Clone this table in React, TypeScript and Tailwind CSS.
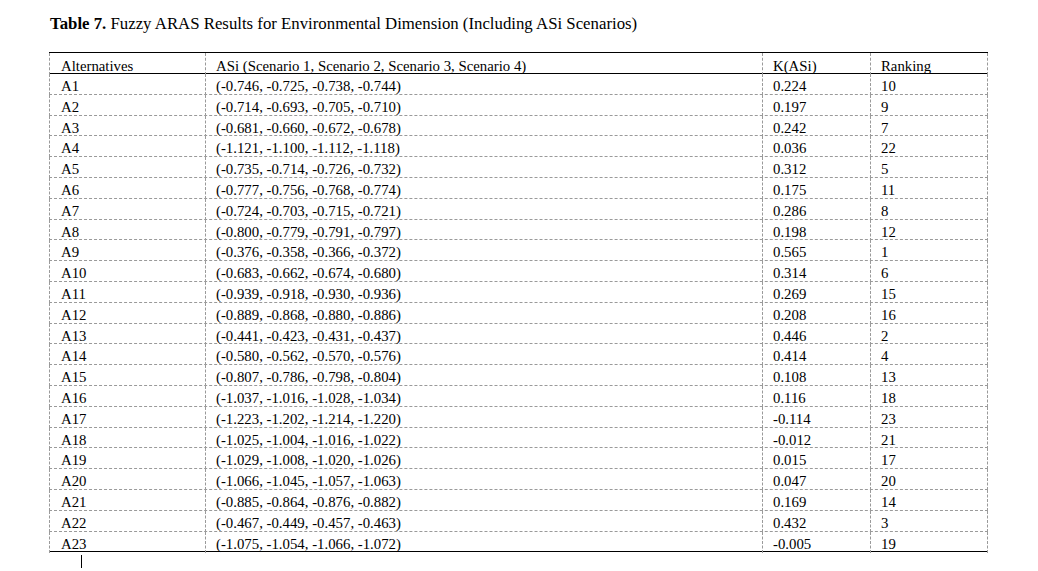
import React from "react";

const rows: [string, string, string, string][] = [
  ["A1", "(-0.746, -0.725, -0.738, -0.744)", "0.224", "10"],
  ["A2", "(-0.714, -0.693, -0.705, -0.710)", "0.197", "9"],
  ["A3", "(-0.681, -0.660, -0.672, -0.678)", "0.242", "7"],
  ["A4", "(-1.121, -1.100, -1.112, -1.118)", "0.036", "22"],
  ["A5", "(-0.735, -0.714, -0.726, -0.732)", "0.312", "5"],
  ["A6", "(-0.777, -0.756, -0.768, -0.774)", "0.175", "11"],
  ["A7", "(-0.724, -0.703, -0.715, -0.721)", "0.286", "8"],
  ["A8", "(-0.800, -0.779, -0.791, -0.797)", "0.198", "12"],
  ["A9", "(-0.376, -0.358, -0.366, -0.372)", "0.565", "1"],
  ["A10", "(-0.683, -0.662, -0.674, -0.680)", "0.314", "6"],
  ["A11", "(-0.939, -0.918, -0.930, -0.936)", "0.269", "15"],
  ["A12", "(-0.889, -0.868, -0.880, -0.886)", "0.208", "16"],
  ["A13", "(-0.441, -0.423, -0.431, -0.437)", "0.446", "2"],
  ["A14", "(-0.580, -0.562, -0.570, -0.576)", "0.414", "4"],
  ["A15", "(-0.807, -0.786, -0.798, -0.804)", "0.108", "13"],
  ["A16", "(-1.037, -1.016, -1.028, -1.034)", "0.116", "18"],
  ["A17", "(-1.223, -1.202, -1.214, -1.220)", "-0.114", "23"],
  ["A18", "(-1.025, -1.004, -1.016, -1.022)", "-0.012", "21"],
  ["A19", "(-1.029, -1.008, -1.020, -1.026)", "0.015", "17"],
  ["A20", "(-1.066, -1.045, -1.057, -1.063)", "0.047", "20"],
  ["A21", "(-0.885, -0.864, -0.876, -0.882)", "0.169", "14"],
  ["A22", "(-0.467, -0.449, -0.457, -0.463)", "0.432", "3"],
  ["A23", "(-1.075, -1.054, -1.066, -1.072)", "-0.005", "19"],
];

function Row({ cells, header, last }: { cells: string[]; header?: boolean; last?: boolean }) {
  const rowCls = header
    ? "h-[22px] border-t border-b border-t-black border-b-black border-solid"
    : last
    ? "h-[20.8px] border-b border-solid border-b-black"
    : "h-[20.8px] border-b border-dashed border-b-[#9a9a9a]";
  const padTop = header ? "pt-[4.5px]" : "pt-[4px]";
  return (
    <div className={`grid grid-cols-[156px_557px_108px_117.5px] ${rowCls}`}>
      {cells.map((c, i) => (
        <div
          key={i}
          className={`${padTop} border-l border-dashed border-l-[#9a9a9a] ${
            i === 3 ? "border-r border-r-[#9a9a9a]" : ""
          } ${i === 0 ? "pl-[11px]" : "pl-[10px]"} whitespace-nowrap`}
        >
          {c}
        </div>
      ))}
    </div>
  );
}

export default function App() {
  return (
    <div
      className="w-[1038px] h-[571px] bg-white text-black overflow-hidden"
      style={{ fontFamily: '"Liberation Serif", "Times New Roman", serif' }}
    >
      <div className="pl-[50px] pt-[14px] leading-[20px] text-[16.8px] whitespace-nowrap">
        <span className="font-bold">Table 7.</span> Fuzzy ARAS Results for Environmental Dimension (Including ASi Scenarios)
      </div>
      <div className="ml-[49px] mt-[18px] w-[938.5px] text-[14.8px] leading-[17px]">
        <Row header cells={["Alternatives", "ASi (Scenario 1, Scenario 2, Scenario 3, Scenario 4)", "K(ASi)", "Ranking"]} />
        {rows.map((r, i) => (
          <Row key={r[0]} cells={r} last={i === rows.length - 1} />
        ))}
      </div>
      <div className="ml-[81px] mt-[3px] w-px h-[13px] bg-black" />
    </div>
  );
}
